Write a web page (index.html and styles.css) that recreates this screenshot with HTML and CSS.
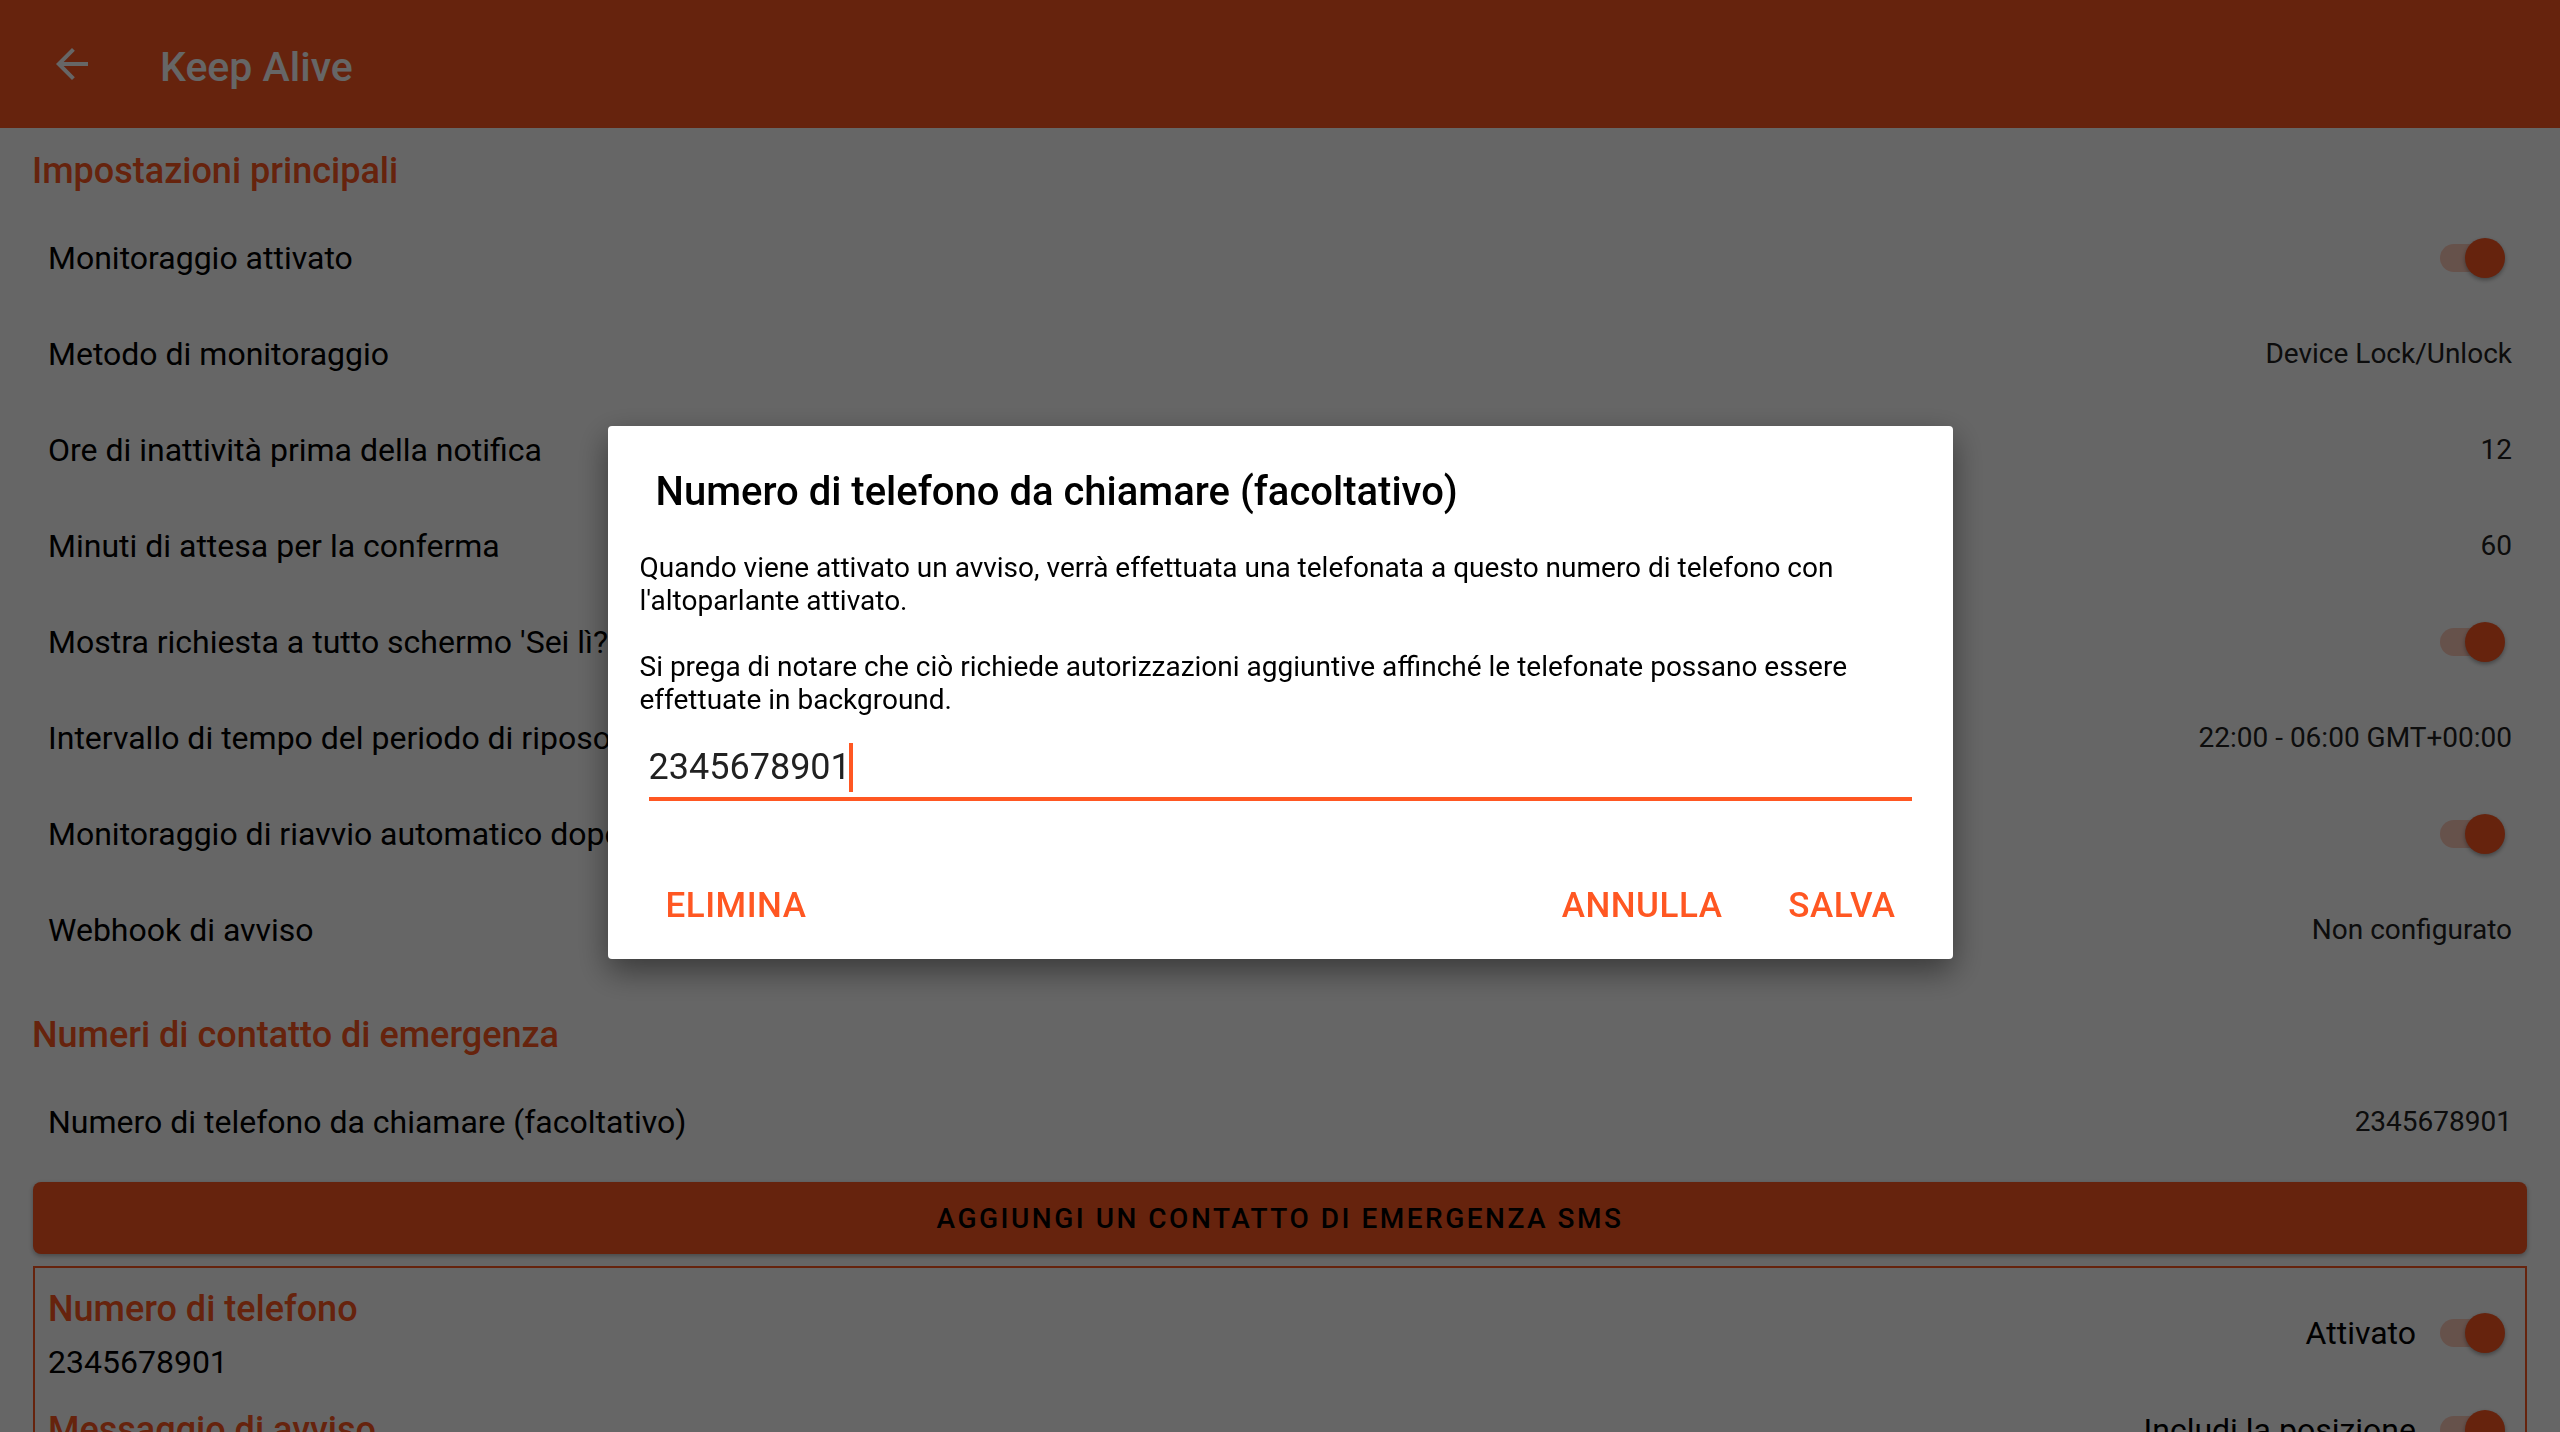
FILE: index.html
```html
<!DOCTYPE html>
<html lang="it">
<head>
  <meta charset="UTF-8">
  <title>Keep Alive</title>
  <link rel="stylesheet" href="styles.css">
</head>
<body>
  <header class="toolbar">
    <svg class="nav-icon" viewBox="0 0 24 24" aria-hidden="true">
      <path d="M20 11H7.83l5.59-5.59L12 4l-8 8 8 8 1.41-1.41L7.83 13H20v-2z"/>
    </svg>
    <h1 class="toolbar-title">Keep Alive</h1>
  </header>

  <main class="prefs">
    <h2 class="category">Impostazioni principali</h2>

    <div class="pref">
      <span class="pref-title">Monitoraggio attivato</span>
      <span class="switch"><span class="track"></span><span class="thumb"></span></span>
    </div>
    <div class="pref">
      <span class="pref-title">Metodo di monitoraggio</span>
      <span class="pref-value">Device Lock/Unlock</span>
    </div>
    <div class="pref">
      <span class="pref-title">Ore di inattività prima della notifica</span>
      <span class="pref-value">12</span>
    </div>
    <div class="pref">
      <span class="pref-title">Minuti di attesa per la conferma</span>
      <span class="pref-value">60</span>
    </div>
    <div class="pref">
      <span class="pref-title">Mostra richiesta a tutto schermo 'Sei lì?'</span>
      <span class="switch"><span class="track"></span><span class="thumb"></span></span>
    </div>
    <div class="pref">
      <span class="pref-title">Intervallo di tempo del periodo di riposo</span>
      <span class="pref-value">22:00 - 06:00 GMT+00:00</span>
    </div>
    <div class="pref">
      <span class="pref-title">Monitoraggio di riavvio automatico dopo il riavvio</span>
      <span class="switch"><span class="track"></span><span class="thumb"></span></span>
    </div>
    <div class="pref">
      <span class="pref-title">Webhook di avviso</span>
      <span class="pref-value">Non configurato</span>
    </div>

    <h2 class="category category-next">Numeri di contatto di emergenza</h2>

    <div class="pref">
      <span class="pref-title">Numero di telefono da chiamare (facoltativo)</span>
      <span class="pref-value">2345678901</span>
    </div>

    <button class="add-btn">Aggiungi un contatto di emergenza SMS</button>

    <div class="contact-card">
      <div class="card-row">
        <div>
          <div class="card-label">Numero di telefono</div>
          <div class="card-value">2345678901</div>
        </div>
        <div class="card-toggle">
          <span>Attivato</span>
          <span class="switch"><span class="track"></span><span class="thumb"></span></span>
        </div>
      </div>
      <div class="card-row card-row-top">
        <div>
          <div class="card-label">Messaggio di avviso</div>
          <div class="card-value">Ho bisogno di aiuto.</div>
        </div>
        <div class="card-toggle">
          <span>Includi la posizione</span>
          <span class="switch"><span class="track"></span><span class="thumb"></span></span>
        </div>
      </div>
    </div>
  </main>

  <!-- phone number dialog, shown over a dimmed page -->
  <div class="scrim">
    <div class="dialog">
      <h3 class="dialog-title">Numero di telefono da chiamare (facoltativo)</h3>
      <div class="dialog-body">
        <p>Quando viene attivato un avviso, verrà effettuata una telefonata a questo numero di telefono con l'altoparlante attivato.</p>
        <p>Si prega di notare che ciò richiede autorizzazioni aggiuntive affinché le telefonate possano essere effettuate in background.</p>
        <div class="field"><span>2345678901</span><span class="caret"></span></div>
      </div>
      <div class="dialog-actions">
        <button class="text-btn">Elimina</button>
        <span class="spacer"></span>
        <button class="text-btn">Annulla</button>
        <button class="text-btn">Salva</button>
      </div>
    </div>
  </div>
</body>
</html>
```

FILE: styles.css
```css
html, body {
  margin: 0;
  height: 100%;
  overflow: hidden;
}
body {
  font-family: Roboto, "Noto Sans", sans-serif;
  background: #fff;
  color: #000;
}

/* toolbar */
.toolbar {
  height: 128px;
  background: #ff5722;
  display: flex;
  align-items: center;
  padding-left: 48px;
}
.nav-icon {
  width: 48px;
  height: 48px;
  fill: #fff;
  flex: none;
}
.toolbar-title {
  margin: 0 0 0 64px;
  padding-top: 6px;
  font-size: 41px;
  line-height: 48px;
  font-weight: 500;
  color: #fff;
}

/* preference list */
.prefs {
  padding: 0 33px;
}
.category {
  margin: 0 0 0 -1px;
  padding: 23px 0 19px;
  font-size: 36px;
  line-height: 40px;
  font-weight: 500;
  color: #ff5722;
}
.category-next {
  margin-top: 14px;
}
.pref {
  height: 96px;
  display: flex;
  align-items: center;
  justify-content: space-between;
  padding: 0 15px;
}
.pref-title {
  font-size: 32px;
  line-height: 40px;
  white-space: nowrap;
}
.pref-value {
  font-size: 28px;
  line-height: 40px;
  color: #212121;
}

/* on-state switch */
.switch {
  position: relative;
  display: inline-block;
  width: 72px;
  height: 40px;
  flex: none;
}
.switch .track {
  position: absolute;
  left: 0;
  top: 6px;
  width: 58px;
  height: 28px;
  border-radius: 14px;
  background: rgba(255, 87, 34, 0.3);
}
.switch .thumb {
  position: absolute;
  left: 25px;
  top: 0;
  width: 40px;
  height: 40px;
  border-radius: 50%;
  background: #ff5722;
  box-shadow: 0 2px 4px rgba(0, 0, 0, 0.35);
}

.add-btn {
  display: block;
  width: 100%;
  height: 72px;
  margin-top: 12px;
  border: 0;
  border-radius: 8px;
  background: #ff5722;
  box-shadow: 0 2px 5px rgba(0, 0, 0, 0.3);
  font-family: inherit;
  font-size: 28px;
  font-weight: 500;
  letter-spacing: 2.5px;
  text-transform: uppercase;
  color: #000;
  padding-top: 2px;
}

.contact-card {
  margin-top: 12px;
  border: 2px solid #ff5722;
  padding: 0 13px;
}
.card-row {
  display: flex;
  align-items: center;
  justify-content: space-between;
  padding-top: 21px;
}
.card-row > .card-toggle {
  margin-bottom: 6px;
}
.card-row-top {
  align-items: flex-start;
  padding-top: 28px;
}
.card-label {
  font-size: 36px;
  line-height: 40px;
  font-weight: 500;
  color: #ff5722;
}
.card-value {
  margin-top: 13px;
  font-size: 32px;
  line-height: 40px;
}
.card-toggle {
  display: flex;
  align-items: center;
  gap: 24px;
  font-size: 32px;
}
.card-row-top > .card-toggle {
  margin: 0;
}

/* dialog */
.scrim {
  position: fixed;
  inset: 0;
  background: rgba(0, 0, 0, 0.6);
  display: flex;
  justify-content: center;
  align-items: center;
  padding-bottom: 48px;
}
.dialog {
  width: 1345px;
  background: #fff;
  border-radius: 4px;
  box-shadow: 0 12px 32px rgba(0, 0, 0, 0.45);
}
.dialog-title {
  margin: 0;
  padding: 42px 48px 0;
  font-size: 40px;
  line-height: 48px;
  font-weight: 500;
}
.dialog-body {
  padding: 0 32px;
}
.dialog-body p {
  margin: 33px 0 0;
  font-size: 28px;
  line-height: 33px;
}
.dialog-body p:first-child {
  margin-top: 35px;
}
.field {
  margin: 27px 9px 0;
  padding-bottom: 5px;
  border-bottom: 4px solid #ff5722;
  font-size: 36px;
  line-height: 48px;
  color: #212121;
  white-space: nowrap;
}
.caret {
  display: inline-block;
  width: 4px;
  height: 49px;
  margin-left: -2px;
  vertical-align: top;
  background: #ff5722;
}
.dialog-actions {
  display: flex;
  align-items: center;
  gap: 66px;
  margin-top: 85px;
  padding: 0 57px 33px 58px;
}
.spacer {
  flex: 1;
}
.text-btn {
  padding: 0;
  border: 0;
  background: none;
  font-family: inherit;
  font-size: 35px;
  line-height: 40px;
  font-weight: 500;
  letter-spacing: 0.5px;
  text-transform: uppercase;
  color: #ff5722;
}
```
